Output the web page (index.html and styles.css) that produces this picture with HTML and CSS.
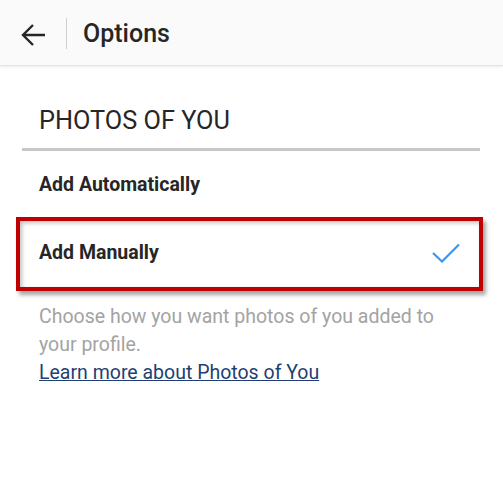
FILE: index.html
```html
<!DOCTYPE html>
<html lang="en">
<head>
  <meta charset="UTF-8">
  <meta name="viewport" content="width=device-width, initial-scale=1.0">
  <title>Options</title>
  <link rel="stylesheet" href="styles.css">
</head>
<body>
  <header class="topbar">
    <button class="back" aria-label="Back">
      <svg width="26" height="24" viewBox="0 0 26 24">
        <path d="M2 12H24M12 2L2 12L12 22" fill="none" stroke="#262626" stroke-width="2.4"/>
      </svg>
    </button>
    <div class="topbar-divider"></div>
    <h1>Options</h1>
  </header>

  <main class="content">
    <h2 class="section-title">PHOTOS OF YOU</h2>

    <div class="option">Add Automatically</div>
    <div class="option selected">
      <span>Add Manually</span>
      <svg class="check" width="28" height="20" viewBox="0 0 28 20">
        <polyline points="1,10 10,18.5 27,1.5" fill="none" stroke="#3897f0" stroke-width="2.2"/>
      </svg>
    </div>

    <p class="hint">Choose how you want photos of you added to your profile.
      <a href="#">Learn more about Photos of You</a>
    </p>
  </main>
</body>
</html>
```

FILE: styles.css
```css
body { margin: 0; background: #fff; font-family: Roboto, "Liberation Sans", sans-serif; color: #262626; }

.topbar { height: 65px; display: flex; align-items: center; background: #fafafa; border-bottom: 1px solid #e3e3e3; box-shadow: 0 1px 3px rgba(0,0,0,0.08); }
.back { margin-left: 21px; padding: 0; border: none; background: none; display: flex; margin-top: 4px; }
.topbar-divider { width: 1px; height: 31px; background: #cfcfcf; margin-left: 19px; margin-top: 1px; }
.topbar h1 { margin: 2px 0 0 16px; font-size: 25px; font-weight: 500; }

.content { padding: 0 23px 0 22px; }
.section-title { margin: 0; padding: 40px 0 12px 17px; font-size: 25.3px; font-weight: 400; line-height: 30px; border-bottom: 3px solid #c8c8c8; }

.option { height: 66px; display: flex; align-items: center; justify-content: space-between; padding: 0 17px; font-size: 19.5px; font-weight: 700; }
.option.selected { margin: 0 -3px 0 -6px; padding: 0 19px 0 19px; border: 4px solid #c00000; box-shadow: 3px 4px 4px rgba(0,0,0,0.35), inset 2px 2px 4px rgba(0,0,0,0.25); }
.option.selected span { margin-top: -4px; }
.check { margin-top: -2px; }

.hint { margin: 12px 0 0; padding: 0 14px 0 17px; font-size: 19.5px; line-height: 28px; color: #a3a3a3; }
.hint a { display: block; color: #1f3f73; }
```
